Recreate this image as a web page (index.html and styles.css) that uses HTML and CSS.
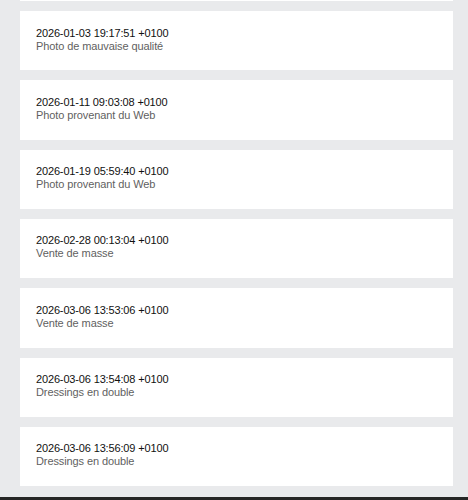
FILE: index.html
```html
<!DOCTYPE html>
<html lang="fr">
<head>
  <meta charset="UTF-8">
  <meta name="viewport" content="width=device-width, initial-scale=1.0">
  <title>Historique</title>
  <link rel="stylesheet" href="styles.css">
</head>
<body>
  <div class="page">
    <ul class="history">
      <!-- bottom edge of the previous entry, scrolled out of view -->
      <li class="entry-cut"></li>
      <li class="entry">
        <span class="date">2026-01-03 19:17:51 +0100</span>
        <span class="reason">Photo de mauvaise qualité</span>
      </li>
      <li class="entry">
        <span class="date">2026-01-11 09:03:08 +0100</span>
        <span class="reason">Photo provenant du Web</span>
      </li>
      <li class="entry">
        <span class="date">2026-01-19 05:59:40 +0100</span>
        <span class="reason">Photo provenant du Web</span>
      </li>
      <li class="entry">
        <span class="date">2026-02-28 00:13:04 +0100</span>
        <span class="reason">Vente de masse</span>
      </li>
      <li class="entry">
        <span class="date">2026-03-06 13:53:06 +0100</span>
        <span class="reason">Vente de masse</span>
      </li>
      <li class="entry">
        <span class="date">2026-03-06 13:54:08 +0100</span>
        <span class="reason">Dressings en double</span>
      </li>
      <li class="entry">
        <span class="date">2026-03-06 13:56:09 +0100</span>
        <span class="reason">Dressings en double</span>
      </li>
    </ul>
  </div>
  <div class="bottom-bar"></div>
</body>
</html>
```

FILE: styles.css
```css
/* General styles */
body {
  margin: 0;
  height: 500px;
  overflow: hidden;
  background-color: #e9eaec;
  font-family: "Liberation Sans", Arial, sans-serif;
  display: flex;
  flex-direction: column;
}

.page {
  flex: 1;
  overflow: hidden;
}

/* List of moderation entries */
.history {
  list-style: none;
  margin: 0;
  padding: 0 15px 0 20px;
  display: flex;
  flex-direction: column;
  gap: 10px;
}

.entry-cut {
  height: 1px;
  background-color: #ffffff;
}

.entry {
  background-color: #ffffff;
  padding: 15.5px 16px 17.83px;
  display: flex;
  flex-direction: column;
}

.date {
  font-size: 11px;
  line-height: 13px;
  letter-spacing: -0.15px;
  color: #111111;
}

.reason {
  font-size: 11px;
  line-height: 13px;
  letter-spacing: -0.1px;
  color: #5f5f5f;
}

/* dark strip at the very bottom of the window */
.bottom-bar {
  height: 3px;
  background-color: #262626;
}
```
